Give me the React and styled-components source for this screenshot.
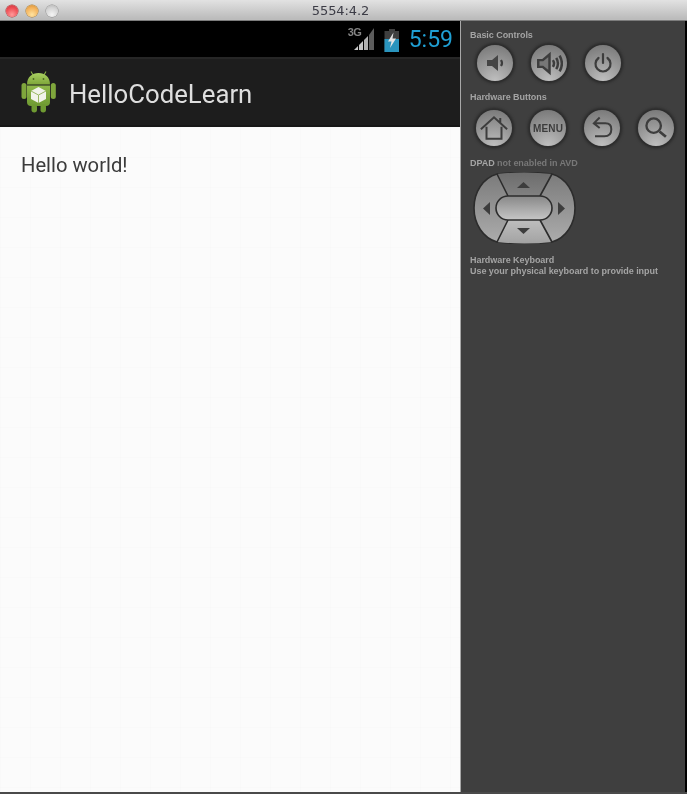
import React from "react";
import styled, { createGlobalStyle } from "styled-components";

const Global = createGlobalStyle`
  html, body { margin: 0; padding: 0; background: #9a9a9a; }
  * { box-sizing: border-box; }
`;

const Window = styled.div`
  width: 687px;
  height: 794px;
  display: flex;
  flex-direction: column;
  overflow: hidden;
  background: #9a9a9a;
`;

const TitleBar = styled.header`
  position: relative;
  height: 21px;
  flex: none;
  display: flex;
  align-items: center;
  justify-content: center;
  padding-right: 6px;
  background: linear-gradient(#e2e2e2, #bcbcbc 92%);
  border-bottom: 1px solid #7c7c7c;
`;

const Lights = styled.div`
  position: absolute;
  left: 6px;
  top: 5px;
  display: flex;
  gap: 8px;
  filter: blur(0.3px);
`;

const Light = styled.span`
  width: 12px;
  height: 12px;
  border-radius: 50%;
  box-shadow: 0 0 0 0.5px ${(p) => p.$edge};
  background: radial-gradient(circle at 50% 80%, ${(p) => p.$glow}, ${(p) => p.$base} 60%, ${(p) => p.$dark});
`;

const WindowTitle = styled.span`
  font: 13px "DejaVu Sans", sans-serif;
  letter-spacing: -0.1px;
  color: #3c3c46;
  filter: blur(0.25px);
`;

const Body = styled.div`
  flex: 1;
  display: flex;
  min-height: 0;
  border-bottom: 2px solid #4a4a4a;
`;

const Phone = styled.main`
  width: 460px;
  flex: none;
  display: flex;
  flex-direction: column;
`;

const StatusBar = styled.div`
  height: 36px;
  flex: none;
  background: #000;
  display: flex;
  align-items: center;
  justify-content: flex-end;
  gap: 9px;
  padding: 2px 7px 0 0;
`;

const SignalBox = styled.div`
  position: relative;
  width: 27px;
  height: 26px;
  filter: blur(0.35px);
`;

const NetLabel = styled.span`
  position: absolute;
  left: 0;
  top: -1px;
  font: bold 11px/12px "Liberation Sans", sans-serif;
  letter-spacing: -0.4px;
  color: #858585;
`;

const SignalIcon = styled.svg`
  position: absolute;
  left: 0;
  top: 0;
`;

const BatteryIcon = styled.svg`
  filter: blur(0.35px);
`;

const Clock = styled.span`
  font: 400 23px/28px Roboto, sans-serif;
  color: #1f9fd3;
  filter: blur(0.25px);
`;

const ActionBar = styled.div`
  height: 70px;
  flex: none;
  display: flex;
  align-items: center;
  gap: 12px;
  padding-left: 21px;
  background: #1d1d1d;
  border-top: 2px solid #262626;
  border-bottom: 2px solid #171717;
`;

const LogoIcon = styled.svg`
  filter: blur(0.4px);
`;

const AppTitle = styled.h1`
  margin: 3px 0 0;
  font: 400 25.75px/32px Roboto, sans-serif;
  color: #dedede;
  filter: blur(0.25px);
`;

const Content = styled.section`
  flex: 1;
  padding: 26px 21px;
  background-color: #fbfbfb;
  background-image: linear-gradient(rgba(0, 0, 0, 0.006) 1px, transparent 1px),
    linear-gradient(90deg, rgba(0, 0, 0, 0.006) 1px, transparent 1px);
  background-size: 30px 30px;
`;

const Greeting = styled.p`
  margin: 0;
  font: 400 20.2px/25px Roboto, sans-serif;
  color: #3b3b3b;
  filter: blur(0.25px);
`;

const Panel = styled.aside`
  flex: 1;
  display: flex;
  flex-direction: column;
  padding: 9px 0 0 9px;
  background: #3f3f3f;
  border-left: 1px solid #a8a8a8;
  border-right: 2px solid #000;
`;

const PanelLabel = styled.div`
  font: bold 9px/10px "Liberation Sans", sans-serif;
  letter-spacing: -0.05px;
  color: #a4a4a4;
  margin-top: ${(p) => p.$top || 0}px;
  filter: blur(0.3px);
  white-space: nowrap;
`;

const Muted = styled.span`
  color: #787878;
`;

const ButtonRow = styled.div`
  display: flex;
  gap: 18px;
  margin: ${(p) => p.$top}px 0 0 ${(p) => p.$left}px;
`;

const RoundButton = styled.div`
  width: 36px;
  height: 36px;
  flex: none;
  border-radius: 50%;
  display: flex;
  align-items: center;
  justify-content: center;
  background: radial-gradient(circle at 50% 100%, #c0c0c0, #989898 50%, #737373 100%);
  box-shadow: 0 0 0 1px #303030, 0 0 3px 2px rgba(20, 20, 20, 0.55);
  filter: blur(0.4px);
`;

const MenuText = styled.span`
  font: bold 10px "Liberation Sans", sans-serif;
  letter-spacing: 0.2px;
  color: #3c3c3c;
`;

const Dpad = styled.svg`
  display: block;
  margin: 4px 0 0 3px;
  filter: blur(0.35px);
`;

const Glyph = ({ children, size = 24 }) => (
  <svg width={size} height={size} viewBox="0 0 24 24" fill="none" stroke="#3d3d3d" strokeWidth="2.2">
    {children}
  </svg>
);

const AndroidLogo = () => (
  <LogoIcon width="36" height="42" viewBox="0 0 36 42">
    <defs>
      <linearGradient id="grn" x1="0" y1="0" x2="0" y2="1">
        <stop offset="0" stopColor="#a9d060" />
        <stop offset="1" stopColor="#7ea63a" />
      </linearGradient>
      <linearGradient id="grnBody" x1="0" y1="0" x2="0" y2="1">
        <stop offset="0" stopColor="#8fb84a" />
        <stop offset="1" stopColor="#6f9a32" />
      </linearGradient>
    </defs>
    <path d="M10 0.5 L12 4 M25 0.5 L23 4" stroke="#8bb045" strokeWidth="1.1" />
    <path d="M6 13.5 C6 6 11 2 17.5 2 C24 2 29 6 29 13.5 Z" fill="url(#grn)" />
    <circle cx="12.5" cy="8" r="0.9" fill="#4c6a22" />
    <circle cx="22.5" cy="8" r="0.9" fill="#4c6a22" />
    <path d="M6 14.5 H29 V31 Q29 35 25 35 H10 Q6 35 6 31 Z" fill="url(#grnBody)" />
    <rect x="0.5" y="12" width="5" height="16" rx="2.5" fill="#7fa63c" />
    <rect x="29.8" y="12" width="5" height="16" rx="2.5" fill="#7fa63c" />
    <rect x="10.5" y="33" width="5.5" height="8.5" rx="2.7" fill="#6f9a32" />
    <rect x="19.5" y="33" width="5.5" height="8.5" rx="2.7" fill="#6f9a32" />
    <path d="M17.5 16 L25 20 V28 L17.5 32 L10 28 V20 Z" fill="#f1f3ea" />
    <path d="M10 20 L17.5 24 L25 20 M17.5 24 V32" stroke="#9ab863" strokeWidth="1" fill="none" />
  </LogoIcon>
);

const OUTER =
  "M24 2 Q51 -1 79 2 C93 6 102 20 102 36 C102 52 93 66 79 70 Q51 73 24 70 C10 66 1 52 1 36 C1 20 10 6 24 2 Z";

const DpadIcon = () => (
  <Dpad width="103" height="72" viewBox="0 0 103 72">
    <defs>
      <clipPath id="dClip">
        <path d={OUTER} />
      </clipPath>
      <linearGradient id="dSide" x1="0" y1="0" x2="0" y2="1">
        <stop offset="0" stopColor="#7a7a7a" />
        <stop offset="1" stopColor="#adadad" />
      </linearGradient>
      <linearGradient id="dTop" x1="0" y1="0" x2="0" y2="1">
        <stop offset="0" stopColor="#6c6c6c" />
        <stop offset="1" stopColor="#818181" />
      </linearGradient>
      <linearGradient id="dBot" x1="0" y1="0" x2="0" y2="1">
        <stop offset="0" stopColor="#bebebe" />
        <stop offset="1" stopColor="#a2a2a2" />
      </linearGradient>
      <linearGradient id="dPill" x1="0" y1="0" x2="0" y2="1">
        <stop offset="0" stopColor="#888" />
        <stop offset="1" stopColor="#c6c6c6" />
      </linearGradient>
    </defs>
    <path d={OUTER} fill="url(#dSide)" stroke="#2c2c2c" strokeWidth="1.6" />
    <g clipPath="url(#dClip)">
      <path d="M24 0 H79 L67 24 H35 Z" fill="url(#dTop)" />
      <path d="M24 72 H79 L67 48 H35 Z" fill="url(#dBot)" />
    </g>
    <path d="M24 2 L35 24 M79 2 L67 24 M24 70 L35 48 M79 70 L67 48" stroke="#2c2c2c" strokeWidth="1.6" />
    <rect x="23" y="24" width="56" height="24" rx="12" fill="url(#dPill)" stroke="#2c2c2c" strokeWidth="1.6" />
    <path d="M44 16 H57 L50.5 10 Z" fill="#3d3d3d" />
    <path d="M44 56 H57 L50.5 62 Z" fill="#3d3d3d" />
    <path d="M17 30 V43 L10 36.5 Z" fill="#3d3d3d" />
    <path d="M85 30 V43 L92 36.5 Z" fill="#3d3d3d" />
  </Dpad>
);

export default function App() {
  return (
    <Window>
      <Global />
      <TitleBar>
        <Lights>
          <Light $edge="#a53a3a" $glow="#ff9a9a" $base="#ee4b52" $dark="#c2343c" />
          <Light $edge="#a87a2a" $glow="#ffe3a0" $base="#f4b25a" $dark="#cf8a2e" />
          <Light $edge="#8c8c8c" $glow="#f4f4f4" $base="#d4d4d4" $dark="#aeaeae" />
        </Lights>
        <WindowTitle>5554:4.2</WindowTitle>
      </TitleBar>
      <Body>
        <Phone>
          <StatusBar>
            <SignalBox>
              <NetLabel>3G</NetLabel>
              <SignalIcon width="27" height="26" viewBox="0 0 27 26">
                <path d="M6 23 L10 19 V23 Z" fill="#c8c8c8" />
                <path d="M11 18 L15 14 V23 H11 Z" fill="#c4c4c4" />
                <path d="M16 13 L20 9 V23 H16 Z" fill="#b0b0b0" />
                <path d="M21 8 L26 1 V23 H21 Z" fill="#5c5c5c" />
              </SignalIcon>
            </SignalBox>
            <BatteryIcon width="16" height="23" viewBox="0 0 16 23">
              <path d="M5 0 H11 V2 H15 V23 H0.5 V2 H5 Z" fill="#3f3f3f" />
              <path d="M0.5 10 H15 V23 H0.5 Z" fill="#2a94bd" />
              <path d="M9.5 3.5 L4 12.5 H7.5 L6 19 L12 9.5 H8.5 Z" fill="#e4e4e4" />
            </BatteryIcon>
            <Clock>5:59</Clock>
          </StatusBar>
          <ActionBar>
            <AndroidLogo />
            <AppTitle>HelloCodeLearn</AppTitle>
          </ActionBar>
          <Content>
            <Greeting>Hello world!</Greeting>
          </Content>
        </Phone>
        <Panel>
          <PanelLabel>Basic Controls</PanelLabel>
          <ButtonRow $top={5} $left={7}>
            <RoundButton>
              <Glyph>
                <path d="M4 9 H9 L15 4 V20 L9 15 H4 Z" fill="#454545" stroke="none" />
                <path d="M18 9 Q20 12 18 15" />
              </Glyph>
            </RoundButton>
            <RoundButton>
              <Glyph size={27}>
                <path d="M2 9 H6 L12 4 V20 L6 15 H2 Z" fill="#777" />
                <path d="M15 9 Q17 12 15 15 M18 7 Q21 12 18 17 M21 5 Q25 12 21 19" />
              </Glyph>
            </RoundButton>
            <RoundButton>
              <Glyph>
                <path d="M12 3 V12" strokeLinecap="round" />
                <path d="M7.5 7 A7.5 7.5 0 1 0 16.5 7" strokeLinecap="round" />
              </Glyph>
            </RoundButton>
          </ButtonRow>
          <PanelLabel $top={11}>Hardware Buttons</PanelLabel>
          <ButtonRow $top={8} $left={6}>
            <RoundButton>
              <Glyph size={30}>
                <path d="M1.5 13 L12 3.5 L22.5 13 M6 11 V20.5 H18 V11 M17 4 V8" strokeWidth="1.6" />
              </Glyph>
            </RoundButton>
            <RoundButton>
              <MenuText>MENU</MenuText>
            </RoundButton>
            <RoundButton>
              <Glyph size={28}>
                <path d="M10 3 L5 8 L10 12 M5 8 H15 Q20 8 20 13 Q20 19 14 19 H6" strokeWidth="1.7" />
              </Glyph>
            </RoundButton>
            <RoundButton>
              <Glyph size={28}>
                <circle cx="10" cy="10" r="6.2" strokeWidth="2" />
                <path d="M15 15 L20.5 19.5" strokeWidth="2.4" />
              </Glyph>
            </RoundButton>
          </ButtonRow>
          <PanelLabel $top={12}>
            DPAD <Muted>not enabled in AVD</Muted>
          </PanelLabel>
          <DpadIcon />
          <PanelLabel $top={11}>Hardware Keyboard</PanelLabel>
          <PanelLabel $top={1}>Use your physical keyboard to provide input</PanelLabel>
        </Panel>
      </Body>
    </Window>
  );
}
